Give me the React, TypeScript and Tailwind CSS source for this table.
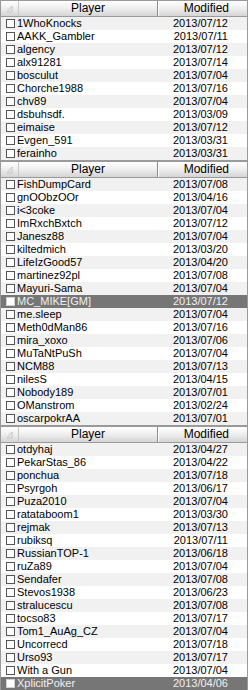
import React from "react";

type Row = { name: string; date: string; selected?: boolean };

const panels: Row[][] = [
  [
    { name: "1WhoKnocks", date: "2013/07/12" },
    { name: "AAKK_Gambler", date: "2013/07/11" },
    { name: "algency", date: "2013/07/12" },
    { name: "alx91281", date: "2013/07/14" },
    { name: "bosculut", date: "2013/07/04" },
    { name: "Chorche1988", date: "2013/07/16" },
    { name: "chv89", date: "2013/07/04" },
    { name: "dsbuhsdf.", date: "2013/03/09" },
    { name: "eimaise", date: "2013/07/12" },
    { name: "Evgen_591", date: "2013/03/31" },
    { name: "ferainho", date: "2013/03/31" },
  ],
  [
    { name: "FishDumpCard", date: "2013/07/08" },
    { name: "gnOObzOOr", date: "2013/04/16" },
    { name: "i<3coke", date: "2013/07/04" },
    { name: "ImRxchBxtch", date: "2013/07/12" },
    { name: "Janesz88", date: "2013/07/04" },
    { name: "kiltedmich", date: "2013/03/20" },
    { name: "LifeIzGood57", date: "2013/04/20" },
    { name: "martinez92pl", date: "2013/07/08" },
    { name: "Mayuri-Sama", date: "2013/07/04" },
    { name: "MC_MIKE[GM]", date: "2013/07/12", selected: true },
    { name: "me.sleep", date: "2013/07/04" },
    { name: "Meth0dMan86", date: "2013/07/16" },
    { name: "mira_xoxo", date: "2013/07/06" },
    { name: "MuTaNtPuSh", date: "2013/07/04" },
    { name: "NCM88", date: "2013/07/13" },
    { name: "nilesS", date: "2013/04/15" },
    { name: "Nobody189", date: "2013/07/01" },
    { name: "OManstrom", date: "2013/02/24" },
    { name: "oscarpokrAA", date: "2013/07/01" },
  ],
  [
    { name: "otdyhaj", date: "2013/04/27" },
    { name: "PekarStas_86", date: "2013/04/22" },
    { name: "ponchua", date: "2013/07/18" },
    { name: "Psyrgoh", date: "2013/06/17" },
    { name: "Puza2010", date: "2013/07/04" },
    { name: "ratataboom1", date: "2013/03/30" },
    { name: "rejmak", date: "2013/07/13" },
    { name: "rubiksq", date: "2013/07/11" },
    { name: "RussianTOP-1", date: "2013/06/18" },
    { name: "ruZa89", date: "2013/07/04" },
    { name: "Sendafer", date: "2013/07/08" },
    { name: "Stevos1938", date: "2013/06/23" },
    { name: "stralucescu", date: "2013/07/08" },
    { name: "tocso83", date: "2013/07/17" },
    { name: "Tom1_AuAg_CZ", date: "2013/07/04" },
    { name: "Uncorrecd", date: "2013/07/18" },
    { name: "Urso93", date: "2013/07/17" },
    { name: "With a Gun", date: "2013/07/04" },
    { name: "XplicitPoker", date: "2013/04/06", selected: true },
  ],
];

function Header() {
  return (
    <div className="flex h-[16px] border-b border-[#9a9a9a] bg-gradient-to-b from-white via-[#eeeeee] to-[#d4d4d4] text-[12px] leading-[15px] text-black">
      <div className="flex w-[18px] shrink-0 items-center justify-center border-r border-[#c8c8c8]">
        <svg width="8" height="8" viewBox="0 0 8 8">
          <path d="M1 7 L6 1 L6 7 Z" fill="none" stroke="#c4c4c4" strokeWidth="1" />
        </svg>
      </div>
      <div className="w-[139px] shrink-0 border-r border-[#8c8c8c] text-center">Player</div>
      <div className="flex-1 border-l border-white pr-[18px] text-right">Modified</div>
    </div>
  );
}

function Panel({ rows }: { rows: Row[] }) {
  return (
    <div className="border border-[#9a9a9a] bg-white">
      <Header />
      {rows.map((r, i) => (
        <div
          key={r.name}
          className={
            "flex h-[13px] items-center text-[11px] leading-[13px] " +
            (r.selected
              ? "bg-[#767676] text-[#f0f0f0]"
              : i % 2 === 0
                ? "bg-[#f1f1f1] text-black"
                : "bg-white text-black")
          }
        >
          <div className="flex flex-1 items-center gap-[2px] pl-[5px]">
            <span
              className={
                "h-[9px] w-[9px] shrink-0 border " +
                (r.selected ? "border-[#d0d0d0] bg-white" : "border-[#555555] bg-white")
              }
            />
            <span className="whitespace-nowrap">{r.name}</span>
          </div>
          <div className="pr-[19px] text-right">{r.date}</div>
        </div>
      ))}
    </div>
  );
}

export default function App() {
  return (
    <div className="w-[248px] overflow-hidden bg-white" style={{ fontFamily: '"Liberation Sans", Arial, sans-serif' }}>
      {panels.map((p, i) => (
        <Panel key={i} rows={p} />
      ))}
    </div>
  );
}
